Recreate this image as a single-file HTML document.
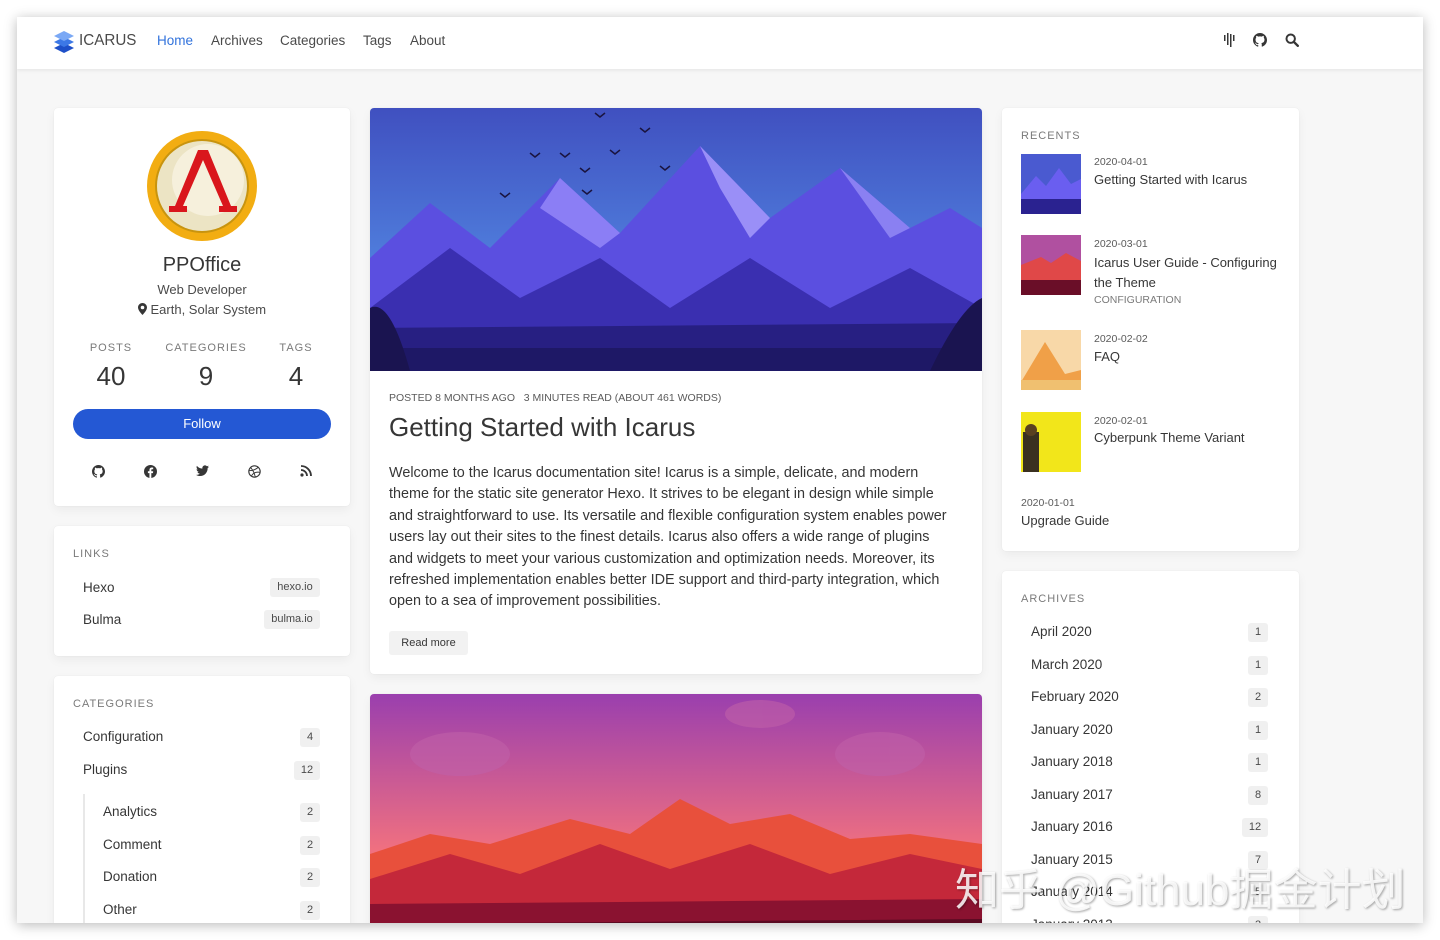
<!DOCTYPE html>
<html><head><meta charset="utf-8"><style>
*{box-sizing:border-box;margin:0;padding:0}
body{width:1440px;height:940px;background:#fff;font-family:"Liberation Sans","Noto Sans CJK SC",sans-serif;color:#363636;position:relative;overflow:hidden}
.win{position:absolute;left:17px;top:17px;width:1406px;height:906px;background:#f7f7f7;box-shadow:0 2px 12px rgba(0,0,0,.28);overflow:hidden}
.nav{position:absolute;left:0;top:0;width:1406px;height:52px;background:#fff;box-shadow:0 2px 3px rgba(0,0,0,.06)}
.a{position:absolute;white-space:nowrap}
.card{position:absolute;background:#fff;border-radius:4px;box-shadow:0 4px 10px rgba(0,0,0,.05),0 0 1px rgba(0,0,0,.1);overflow:hidden}
.h{font-size:11px;letter-spacing:1px;color:#7a7a7a}
.tag{position:absolute;background:#f0f0f0;border-radius:3px;font-size:11px;color:#4a4a4a;text-align:center;height:19px;line-height:19px}
.li{font-size:13.5px;color:#363636}
</style></head><body>
<div class="win">
 <div class="nav">
  <svg class="a" style="left:36px;top:13px" width="22" height="24" viewBox="0 0 22 24"><path d="M11 13 L21 18 L11 23 L1 18Z" fill="#1e50c8"/><path d="M11 7 L21 12 L11 17 L1 12Z" fill="#3c78e6"/><path d="M11 1 L21 6 L11 11 L1 6Z" fill="#7aa8f5"/></svg>
  <div class="a" style="left:62px;top:15px;font-size:16px;color:#4a4a4a;transform:scaleX(.95);transform-origin:left">ICARUS</div>
  <div class="a" style="left:140px;top:16px;font-size:13.5px;color:#3273dc">Home</div>
  <div class="a" style="left:194px;top:16px;font-size:13.5px;color:#4a4a4a">Archives</div>
  <div class="a" style="left:263px;top:16px;font-size:13.5px;color:#4a4a4a">Categories</div>
  <div class="a" style="left:346px;top:16px;font-size:13.5px;color:#4a4a4a">Tags</div>
  <div class="a" style="left:393px;top:16px;font-size:13.5px;color:#4a4a4a">About</div>
  <svg class="a" style="left:1206px;top:16px" width="12" height="14"><g fill="#363636"><rect x="1" y="2" width="1.5" height="6"/><rect x="4" y="0" width="1.5" height="12"/><rect x="7" y="1" width="1.5" height="13"/><rect x="10" y="2" width="1.5" height="6"/></g></svg>
  <svg class="a" style="left:1236px;top:16px" width="14" height="14" viewBox="0 0 16 16"><path fill="#363636" d="M8 0C3.6 0 0 3.6 0 8c0 3.5 2.3 6.5 5.5 7.6.4.1.5-.2.5-.4v-1.4c-2.2.5-2.7-1-2.7-1-.4-.9-.9-1.2-.9-1.200-.7-.5.1-.5.1-.5.8.1 1.2.8 1.2.8.7 1.2 1.9.9 2.3.7.1-.5.3-.9.5-1.1-1.8-.2-3.6-.9-3.6-4 0-.9.3-1.6.8-2.100-.1-.2-.4-1 .1-2.1 0 0 .7-.2 2.2.8.6-.2 1.3-.3 2-.3s1.4.1 2 .3c1.5-1 2.2-.8 2.2-.8.4 1.1.2 1.9.1 2.1.5.6.8 1.3.8 2.1 0 3.1-1.9 3.7-3.6 3.9.3.3.5.8.5 1.5v2.2c0 .2.1.5.6.4C13.7 14.5 16 11.5 16 8c0-4.4-3.6-8-8-8z"/></svg>
  <svg class="a" style="left:1268px;top:16px" width="14" height="14" viewBox="0 0 14 14"><circle cx="5.7" cy="5.7" r="4.2" stroke="#363636" stroke-width="2" fill="none"/><path d="M8.8 8.8L12.8 12.8" stroke="#363636" stroke-width="2.4" stroke-linecap="round"/></svg>
 </div>

 <div class="card" style="left:37px;top:91px;width:296px;height:398px">
  <svg class="a" style="left:92px;top:22px" width="112" height="112" viewBox="0 0 112 112"><circle cx="56" cy="56" r="55" fill="#f2ad12"/><circle cx="56" cy="56" r="47" fill="#c8940f"/><circle cx="56" cy="56" r="45" fill="#ece4c4"/><circle cx="62" cy="50" r="36" fill="#f6f0dc"/><path d="M52 20 L62 20 L85 76 L91 76 L91 82 L73 82 L73 76 L77 76 L57 30 L37 76 L41 76 L41 82 L23 82 L23 76 L29 76Z" fill="#d9161c"/></svg>
  <div class="a" style="left:0;width:296px;text-align:center;top:146px;font-size:20px;color:#363636">PPOffice</div>
  <div class="a" style="left:0;width:296px;text-align:center;top:174px;font-size:13px;color:#4a4a4a">Web Developer</div>
  <div class="a" style="left:0;width:296px;text-align:center;top:194px;font-size:13px;color:#4a4a4a"><svg width="9" height="12" viewBox="0 0 9 12" style="vertical-align:-1px"><path d="M4.5 0C2 0 0 2 0 4.5 0 7.5 4.5 12 4.5 12S9 7.5 9 4.5C9 2 7 0 4.5 0zm0 6.3a1.8 1.8 0 110-3.6 1.8 1.8 0 010 3.6z" fill="#363636"/></svg> Earth, Solar System</div>
  <div class="a h" style="left:17px;width:80px;text-align:center;top:234px">POSTS</div>
  <div class="a h" style="left:102px;width:100px;text-align:center;top:234px">CATEGORIES</div>
  <div class="a h" style="left:212px;width:60px;text-align:center;top:234px">TAGS</div>
  <div class="a" style="left:17px;width:80px;text-align:center;top:253px;font-size:26px">40</div>
  <div class="a" style="left:102px;width:100px;text-align:center;top:253px;font-size:26px">9</div>
  <div class="a" style="left:212px;width:60px;text-align:center;top:253px;font-size:26px">4</div>
  <div class="a" style="left:19px;top:301px;width:258px;height:30px;border-radius:15px;background:#2458d4;color:#fff;font-size:13px;text-align:center;line-height:30px">Follow</div>
  <svg class="a" style="left:38px;top:357px" width="13" height="13" viewBox="0 0 16 16"><path fill="#363636" d="M8 0C3.6 0 0 3.6 0 8c0 3.5 2.3 6.5 5.5 7.6.4.1.5-.2.5-.4v-1.4c-2.2.5-2.7-1-2.7-1-.4-.9-.9-1.2-.9-1.2-.7-.5.1-.5.1-.5.8.1 1.2.8 1.2.8.7 1.2 1.9.9 2.3.7.1-.5.3-.9.5-1.1-1.8-.2-3.6-.9-3.6-4 0-.9.3-1.6.8-2.1-.1-.2-.4-1 .1-2.1 0 0 .7-.2 2.2.8.6-.2 1.3-.3 2-.3s1.4.1 2 .3c1.5-1 2.2-.8 2.2-.8.4 1.1.2 1.9.1 2.1.5.6.8 1.3.8 2.1 0 3.1-1.9 3.7-3.6 3.9.3.3.5.8.5 1.5v2.2c0 .2.1.5.6.4C13.7 14.5 16 11.5 16 8c0-4.4-3.6-8-8-8z"/></svg>
  <svg class="a" style="left:90px;top:357px" width="13" height="13" viewBox="0 0 16 16"><circle cx="8" cy="8" r="8" fill="#363636"/><path d="M9 16V10h2l.3-2.3H9V6.3c0-.6.2-1 1.1-1h1.2V3.2c-.2 0-.9-.1-1.7-.1-1.7 0-2.9 1-2.9 2.9v1.7H4.8V10h1.9v6z" fill="#fff"/></svg>
  <svg class="a" style="left:142px;top:357px" width="13" height="12" viewBox="0 0 16 14"><path fill="#363636" d="M16 1.7c-.6.3-1.2.4-1.9.5.7-.4 1.2-1 1.4-1.8-.6.4-1.3.6-2.1.8C12.8.5 12 .1 11 .1 9.2.1 7.8 1.6 7.8 3.4c0 .3 0 .5.1.7C5.2 4 2.8 2.7 1.1.7.8 1.2.7 1.8.7 2.4c0 1.1.6 2.1 1.5 2.7-.5 0-1-.2-1.5-.4 0 1.6 1.1 2.9 2.6 3.2-.5.1-1 .2-1.5.1.4 1.3 1.6 2.2 3.1 2.3-1.1.9-2.5 1.4-4.1 1.4H0c1.5.9 3.2 1.5 5 1.5 6 0 9.3-5 9.3-9.3v-.4c.7-.5 1.2-1.1 1.7-1.8z"/></svg>
  <svg class="a" style="left:194px;top:357px" width="13" height="13" viewBox="0 0 16 16"><circle cx="8" cy="8" r="7" fill="none" stroke="#363636" stroke-width="1.4"/><path d="M3 3c3 3 5 7 6 12M1.5 7c4 0 8-1 11.5-4.5M4 14c2-4 6-6 11-5" fill="none" stroke="#363636" stroke-width="1.2"/></svg>
  <svg class="a" style="left:246px;top:357px" width="12" height="12" viewBox="0 0 12 12"><circle cx="2" cy="10" r="1.6" fill="#363636"/><path d="M1 5a6 6 0 016 6M1 1a10 10 0 0110 10" fill="none" stroke="#363636" stroke-width="1.8"/></svg>
 </div>

 <div class="card" style="left:37px;top:509px;width:296px;height:130px">
  <div class="a h" style="left:19px;top:22px">LINKS</div>
  <div class="a li" style="left:29px;top:54px">Hexo</div>
  <div class="tag" style="left:216px;top:52px;width:50px">hexo.io</div>
  <div class="a li" style="left:29px;top:86px">Bulma</div>
  <div class="tag" style="left:210px;top:84px;width:56px">bulma.io</div>
 </div>

 <div class="card" style="left:37px;top:659px;width:296px;height:280px">
  <div class="a h" style="left:19px;top:22px">CATEGORIES</div>
  <div class="a li" style="left:29px;top:53px">Configuration</div><div class="tag" style="left:246px;top:52px;width:20px">4</div>
  <div class="a li" style="left:29px;top:86px">Plugins</div><div class="tag" style="left:240px;top:85px;width:26px">12</div>
  <div class="a" style="left:29px;top:118px;width:2px;height:140px;background:#e8e8e8"></div>
  <div class="a li" style="left:49px;top:128px">Analytics</div><div class="tag" style="left:246px;top:127px;width:20px">2</div>
  <div class="a li" style="left:49px;top:161px">Comment</div><div class="tag" style="left:246px;top:160px;width:20px">2</div>
  <div class="a li" style="left:49px;top:193px">Donation</div><div class="tag" style="left:246px;top:192px;width:20px">2</div>
  <div class="a li" style="left:49px;top:226px">Other</div><div class="tag" style="left:246px;top:225px;width:20px">2</div>
 </div>

 <div class="card" style="left:353px;top:91px;width:612px;height:566px">
  <svg class="a" style="left:0;top:0" width="612" height="263" viewBox="0 0 612 263">
   <defs><linearGradient id="sk" x1="0" y1="0" x2="0" y2="1"><stop offset="0" stop-color="#4050c0"/><stop offset="1" stop-color="#5a9ef0"/></linearGradient></defs>
   <rect width="612" height="263" fill="url(#sk)"/>
   <polygon points="0,150 60,95 120,140 190,70 250,125 330,38 400,110 470,60 540,120 580,100 612,120 612,263 0,263" fill="#5b4fe0"/>
   <polygon points="190,70 250,125 230,140 170,100" fill="#8b7ef5"/>
   <polygon points="330,38 400,110 380,130 350,80" fill="#9a8ff7"/>
   <polygon points="470,60 540,120 520,130" fill="#8a80f2"/>
   <polygon points="0,200 80,140 150,190 230,150 300,200 380,150 460,200 540,160 612,200 612,263 0,263" fill="#3a2fb0"/>
   <polygon points="0,220 612,215 612,263 0,263" fill="#271f82"/>
   <rect x="0" y="240" width="612" height="23" fill="#1e1866"/>
   <path d="M0 263 L0 200 Q20 190 40 263Z M560 263 Q590 200 612 190 L612 263Z" fill="#1a1450"/>
   <g stroke="#1a1440" stroke-width="1.5" fill="none"><path d="M160 45l5 4 5-4M190 45l5 4 5-4M210 60l5 4 5-4M240 42l5 4 5-4M270 20l5 4 5-4M290 58l5 4 5-4M225 5l5 4 5-4M130 85l5 4 5-4M212 82l5 4 5-4"/></g>
  </svg>
  <div class="a" style="left:19px;top:284px;font-size:10.5px;color:#5a5a5a">POSTED 8 MONTHS AGO &nbsp; 3 MINUTES READ (ABOUT 461 WORDS)</div>
  <div class="a" style="left:19px;top:304px;font-size:26px;color:#363636">Getting Started with Icarus</div>
  <div class="a" style="left:19px;top:355px;font-size:14.4px;line-height:21.4px;color:#363636">Welcome to the Icarus documentation site! Icarus is a simple, delicate, and modern<br>theme for the static site generator Hexo. It strives to be elegant in design while simple<br>and straightforward to use. Its versatile and flexible configuration system enables power<br>users lay out their sites to the finest details. Icarus also offers a wide range of plugins<br>and widgets to meet your various customization and optimization needs. Moreover, its<br>refreshed implementation enables better IDE support and third-party integration, which<br>open to a sea of improvement possibilities.</div>
  <div class="a" style="left:19px;top:523px;width:79px;height:24px;background:#f2f2f2;border-radius:3px;font-size:11px;text-align:center;line-height:24px;color:#363636">Read more</div>
 </div>

 <div class="card" style="left:353px;top:677px;width:612px;height:260px">
  <svg class="a" style="left:0;top:0" width="612" height="260" viewBox="0 0 612 260">
   <defs><linearGradient id="s2" x1="0" y1="0" x2="0" y2="1"><stop offset="0" stop-color="#9a3fae"/><stop offset=".6" stop-color="#f07080"/><stop offset="1" stop-color="#f5907a"/></linearGradient></defs>
   <rect width="612" height="260" fill="url(#s2)"/>
   <g fill="#c060a8" opacity=".6"><ellipse cx="90" cy="60" rx="50" ry="22"/><ellipse cx="510" cy="60" rx="45" ry="22"/><ellipse cx="390" cy="20" rx="35" ry="14"/></g>
   <polygon points="0,160 60,140 120,150 200,125 260,140 310,105 360,130 420,120 480,145 540,140 612,150 612,260 0,260" fill="#e8503c"/>
   <polygon points="0,185 80,160 150,180 230,150 300,175 380,150 460,180 540,160 612,175 612,260 0,260" fill="#c4283a"/>
   <polygon points="0,210 612,205 612,260 0,260" fill="#8a1230"/>
   <polygon points="0,230 612,225 612,260 0,260" fill="#5a0a22"/>
  </svg>
 </div>

 <div class="card" style="left:985px;top:91px;width:297px;height:443px">
  <div class="a h" style="left:19px;top:22px">RECENTS</div>
  <svg class="a" style="left:19px;top:46px" width="60" height="60"><rect width="60" height="60" fill="#4a5ad0"/><polygon points="0,40 15,22 25,32 38,14 50,30 60,25 60,60 0,60" fill="#6a5ef0"/><rect y="45" width="60" height="15" fill="#2a2290"/></svg>
  <div class="a" style="left:92px;top:48px;font-size:10.5px;color:#5a5a5a">2020-04-01</div>
  <div class="a li" style="left:92px;top:64px;font-size:13px">Getting Started with Icarus</div>
  <svg class="a" style="left:19px;top:127px" width="60" height="60"><rect width="60" height="60" fill="#b050a0"/><polygon points="0,30 20,22 30,28 45,18 60,26 60,60 0,60" fill="#e04848"/><rect y="45" width="60" height="15" fill="#6a0e28"/></svg>
  <div class="a" style="left:92px;top:130px;font-size:10.5px;color:#5a5a5a">2020-03-01</div>
  <div class="a li" style="left:92px;top:145px;font-size:13px;line-height:19.5px">Icarus User Guide - Configuring<br>the Theme</div>
  <div class="a" style="left:92px;top:186px;font-size:10.5px;color:#7a7a7a">CONFIGURATION</div>
  <svg class="a" style="left:19px;top:222px" width="60" height="60"><rect width="60" height="60" fill="#f8d8a8"/><polygon points="0,52 24,12 44,44 60,40 60,60 0,60" fill="#f0a048"/><rect y="50" width="60" height="10" fill="#f0c070"/></svg>
  <div class="a" style="left:92px;top:225px;font-size:10.5px;color:#5a5a5a">2020-02-02</div>
  <div class="a li" style="left:92px;top:241px;font-size:13px">FAQ</div>
  <svg class="a" style="left:19px;top:304px" width="60" height="60"><rect width="60" height="60" fill="#f2e61a"/><rect x="2" y="20" width="16" height="40" fill="#3a3020"/><circle cx="10" cy="18" r="6" fill="#5a4020"/></svg>
  <div class="a" style="left:92px;top:307px;font-size:10.5px;color:#5a5a5a">2020-02-01</div>
  <div class="a li" style="left:92px;top:322px;font-size:13px">Cyberpunk Theme Variant</div>
  <div class="a" style="left:19px;top:389px;font-size:10.5px;color:#5a5a5a">2020-01-01</div>
  <div class="a li" style="left:19px;top:405px;font-size:13px">Upgrade Guide</div>
 </div>

 <div class="card" style="left:985px;top:554px;width:297px;height:390px">
  <div class="a h" style="left:19px;top:22px">ARCHIVES</div>
  <div class="a li" style="left:29px;top:53px">April 2020</div><div class="tag" style="left:246px;top:52px;width:20px">1</div>
  <div class="a li" style="left:29px;top:86px">March 2020</div><div class="tag" style="left:246px;top:85px;width:20px">1</div>
  <div class="a li" style="left:29px;top:118px">February 2020</div><div class="tag" style="left:246px;top:117px;width:20px">2</div>
  <div class="a li" style="left:29px;top:151px">January 2020</div><div class="tag" style="left:246px;top:150px;width:20px">1</div>
  <div class="a li" style="left:29px;top:183px">January 2018</div><div class="tag" style="left:246px;top:182px;width:20px">1</div>
  <div class="a li" style="left:29px;top:216px">January 2017</div><div class="tag" style="left:246px;top:215px;width:20px">8</div>
  <div class="a li" style="left:29px;top:248px">January 2016</div><div class="tag" style="left:240px;top:247px;width:26px">12</div>
  <div class="a li" style="left:29px;top:281px">January 2015</div><div class="tag" style="left:246px;top:280px;width:20px">7</div>
  <div class="a li" style="left:29px;top:313px">January 2014</div><div class="tag" style="left:246px;top:312px;width:20px">5</div>
  <div class="a li" style="left:29px;top:346px">January 2013</div><div class="tag" style="left:246px;top:345px;width:20px">3</div>
 </div>
</div>
<div class="a" style="left:955px;top:854px;font-size:44px;color:rgba(255,255,255,.85);text-shadow:1px 1px 2px rgba(0,0,0,.35);font-family:'Liberation Sans','Noto Sans CJK SC',sans-serif">知乎 @Github掘金计划</div>
</body></html>
